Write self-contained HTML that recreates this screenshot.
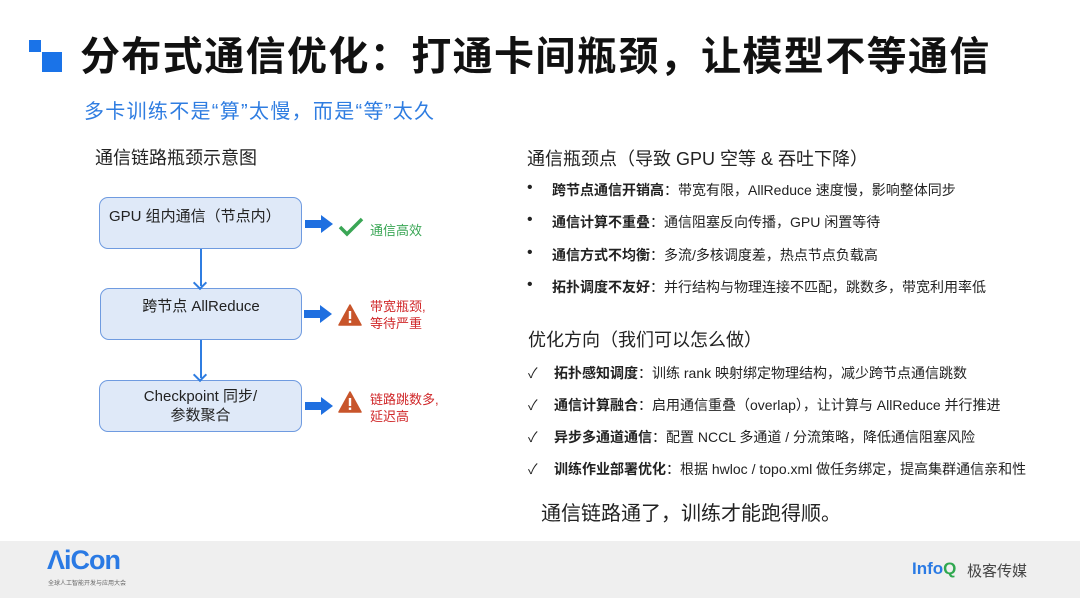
<!DOCTYPE html>
<html><head><meta charset="utf-8"><style>
*{margin:0;padding:0;box-sizing:border-box}
body{width:1080px;height:598px;overflow:hidden;background:#fff;font-family:"Liberation Sans","Noto Sans CJK SC",sans-serif;position:relative;color:#222}
.a{position:absolute;white-space:nowrap}
.box{position:absolute;background:#dfe9f8;border:1.5px solid #6f9be0;border-radius:9px;font-size:15px;color:#222;text-align:center}
.varr{position:absolute;width:2px;background:#2f7de1}
.varr:after{content:"";position:absolute;left:-5px;bottom:-2px;width:8px;height:8px;border-right:2px solid #2f7de1;border-bottom:2px solid #2f7de1;transform:rotate(45deg)}
.rarr{position:absolute;width:28px;height:18px}
.b{font-weight:bold}
.row{font-size:14px;color:#222}
.dot{font-size:16px}
</style></head><body>
<div class="a" style="left:29px;top:40px;width:12px;height:12px;background:#1a73e8"></div>
<div class="a" style="left:42px;top:52px;width:20px;height:20px;background:#1a73e8"></div>
<div class="a" style="left:80px;top:24px;font-size:40px;font-weight:bold;color:#111;letter-spacing:1.4px">分布式通信优化：打通卡间瓶颈，让模型不等通信</div>
<div class="a" style="left:84px;top:95px;font-size:20px;color:#2f7de1;letter-spacing:1.3px">多卡训练不是“算”太慢，而是“等”太久</div>

<div class="a" style="left:95px;top:144px;font-size:18px;color:#222">通信链路瓶颈示意图</div>
<div class="box" style="left:99px;top:197px;width:203px;height:52px;padding-top:7px;text-align:left;padding-left:9px">GPU 组内通信（节点内）</div>
<div class="box" style="left:100px;top:288px;width:202px;height:52px;padding-top:6px">跨节点 AllReduce</div>
<div class="box" style="left:99px;top:380px;width:203px;height:52px;padding-top:6px;line-height:19px">Checkpoint 同步/<br>参数聚合</div>
<div class="varr" style="left:200px;top:249px;height:37px"></div>
<div class="varr" style="left:200px;top:340px;height:38px"></div>

<svg class="rarr" style="left:305px;top:215px" viewBox="0 0 28 18"><path d="M0 5h16V0l12 9-12 9v-5H0z" fill="#1f6fe0"/></svg>
<svg class="rarr" style="left:304px;top:305px" viewBox="0 0 28 18"><path d="M0 5h16V0l12 9-12 9v-5H0z" fill="#1f6fe0"/></svg>
<svg class="rarr" style="left:305px;top:397px" viewBox="0 0 28 18"><path d="M0 5h16V0l12 9-12 9v-5H0z" fill="#1f6fe0"/></svg>

<svg class="a" style="left:338px;top:216px" width="26" height="22" viewBox="0 0 26 22"><path d="M2 11l7 7L24 3" fill="none" stroke="#3aa655" stroke-width="3.5"/></svg>
<div class="a" style="left:370px;top:220px;font-size:13px;color:#3aa655">通信高效</div>
<svg class="a" style="left:338px;top:304px" width="24" height="22" viewBox="0 0 24 22"><path d="M12 1L23 21H1z" fill="#c8552b" stroke="#c8552b" stroke-linejoin="round" stroke-width="1.5"/><rect x="10.8" y="7" width="2.4" height="8" fill="#fff"/><rect x="10.8" y="16.5" width="2.4" height="2.4" fill="#fff"/></svg>
<div class="a" style="left:370px;top:298px;font-size:13px;color:#d0282a;line-height:17px">带宽瓶颈,<br>等待严重</div>
<svg class="a" style="left:338px;top:391px" width="24" height="22" viewBox="0 0 24 22"><path d="M12 1L23 21H1z" fill="#c8552b" stroke="#c8552b" stroke-linejoin="round" stroke-width="1.5"/><rect x="10.8" y="7" width="2.4" height="8" fill="#fff"/><rect x="10.8" y="16.5" width="2.4" height="2.4" fill="#fff"/></svg>
<div class="a" style="left:370px;top:391px;font-size:13px;color:#d0282a;line-height:17px">链路跳数多,<br>延迟高</div>

<div class="a" style="left:527px;top:145px;font-size:18px">通信瓶颈点（导致 GPU 空等 &amp; 吞吐下降）</div>
<div class="a row dot" style="left:527px;top:179px">•</div><div class="a row" style="left:552px;top:180px"><span class="b">跨节点通信开销高</span>：带宽有限，AllReduce 速度慢，影响整体同步</div>
<div class="a row dot" style="left:527px;top:211px">•</div><div class="a row" style="left:552px;top:212px"><span class="b">通信计算不重叠</span>：通信阻塞反向传播，GPU 闲置等待</div>
<div class="a row dot" style="left:527px;top:244px">•</div><div class="a row" style="left:552px;top:245px"><span class="b">通信方式不均衡</span>：多流/多核调度差，热点节点负载高</div>
<div class="a row dot" style="left:527px;top:276px">•</div><div class="a row" style="left:552px;top:277px"><span class="b">拓扑调度不友好</span>：并行结构与物理连接不匹配，跳数多，带宽利用率低</div>

<div class="a" style="left:528px;top:326px;font-size:18px">优化方向（我们可以怎么做）</div>
<div class="a row" style="left:528px;top:363px">✓</div><div class="a row" style="left:554px;top:363px"><span class="b">拓扑感知调度</span>：训练 rank 映射绑定物理结构，减少跨节点通信跳数</div>
<div class="a row" style="left:528px;top:395px">✓</div><div class="a row" style="left:554px;top:395px"><span class="b">通信计算融合</span>：启用通信重叠（overlap），让计算与 AllReduce 并行推进</div>
<div class="a row" style="left:528px;top:427px">✓</div><div class="a row" style="left:554px;top:427px"><span class="b">异步多通道通信</span>：配置 NCCL 多通道 / 分流策略，降低通信阻塞风险</div>
<div class="a row" style="left:528px;top:459px">✓</div><div class="a row" style="left:554px;top:459px"><span class="b">训练作业部署优化</span>：根据 hwloc / topo.xml 做任务绑定，提高集群通信亲和性</div>
<div class="a" style="left:541px;top:497px;font-size:20px">通信链路通了，训练才能跑得顺。</div>

<div class="a" style="left:0;top:541px;width:1080px;height:57px;background:#efefef"></div>
<div class="a" style="left:47px;top:545px;font-size:27px;font-weight:bold;color:#2a7ae4;letter-spacing:-1px">ΛiCon</div>
<div class="a" style="left:48px;top:578px;font-size:6px;color:#666">全球人工智能开发与应用大会</div>
<div class="a" style="left:912px;top:559px;font-size:17px;font-weight:bold;color:#2a7ae4">Info<span style="color:#2fa84f">Q</span></div>
<div class="a" style="left:967px;top:560px;font-size:15px;color:#444">极客传媒</div>
</body></html>
